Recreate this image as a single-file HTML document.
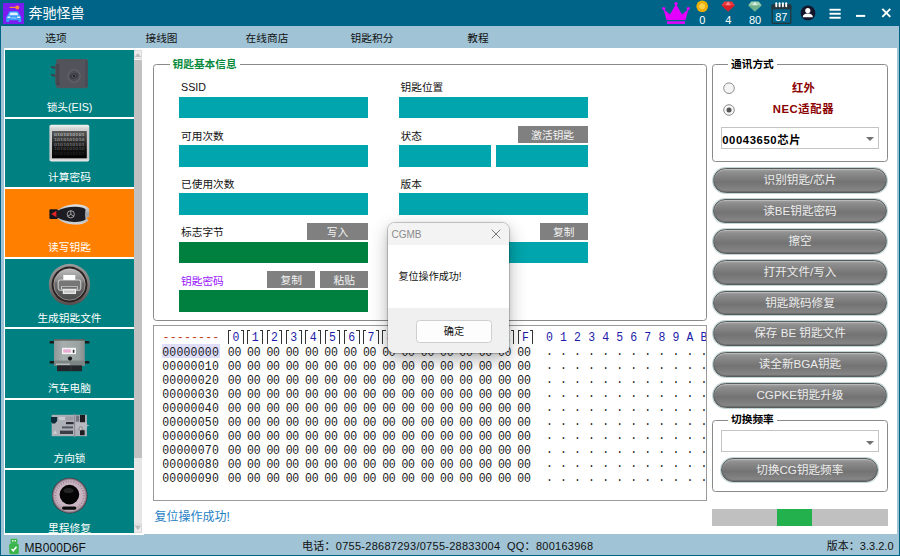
<!DOCTYPE html><html lang="zh"><head><meta charset="utf-8"><title>奔驰怪兽</title><style>
*{box-sizing:border-box;margin:0;padding:0}
html,body{width:900px;height:556px;overflow:hidden;background:#fff}
body{position:relative;font-family:"Liberation Sans","Noto Sans CJK SC",sans-serif;font-size:10.7px;color:#000}
.abs{position:absolute}
#title{left:0;top:0;width:900px;height:25.6px;background:#006488}
#menu{left:0;top:25.6px;width:900px;height:22.4px;background:#a0c4d6}
#lb{left:0;top:26px;width:3.5px;height:530px;background:#a0c4d6}
#rb{left:896.5px;top:26px;width:3.5px;height:530px;background:#a0c4d6}
#ld{left:0;top:0;width:1.3px;height:556px;background:#006488}
#rd{left:898.7px;top:0;width:1.3px;height:556px;background:#006488}
#bd{left:0;top:554.5px;width:900px;height:1.5px;background:#006488}
#status{left:0;top:534px;width:900px;height:20.5px;background:#a0c4d6}
.mi{top:27px;height:22px;line-height:22px;font-size:10.7px;color:#111;white-space:nowrap;transform:translateX(-50%)}
.sb{left:5px;width:128.6px;height:68.25px;background:#008080;overflow:hidden}
.sb .lab{position:absolute;left:0;width:129px;text-align:center;color:#fff;font-size:10.7px;line-height:14px;top:51.5px;white-space:nowrap}
.tin{background:#00a5ad;height:21.7px}
.gin{background:#00803e;height:21.9px}
.gb{background:#808080;color:#f4f4f4;text-align:center;font-size:10.7px;height:17px;line-height:18px;white-space:nowrap}
.fl{font-size:10.7px;line-height:14px;white-space:nowrap;color:#111}
.grp{border:1px solid #8a8a8a;border-radius:3.5px}
.glab{background:#fff;font-weight:bold;font-size:10.7px;line-height:14px;white-space:nowrap;padding:0 3px}
.pill{height:24.8px;border-radius:12.4px;border:1px solid #565c5c;background:linear-gradient(#a2a2a2 0%,#8e8e8e 14%,#7c7c7c 42%,#737373 56%,#7e7e7e 80%,#8a8a8a 100%);box-shadow:0 0 0 1px #c3d6d6, inset 0 1px 1px rgba(255,255,255,.3), inset 0 -1px 1px rgba(0,0,0,.2);color:#ececec;font-size:11.6px;line-height:21.8px;text-align:center;white-space:nowrap}
.combo{border:1px solid #c4c4c4;background:#fff;height:22px}
.combo:after{content:"";position:absolute;right:4px;top:9.4px;border-left:4.2px solid transparent;border-right:4.2px solid transparent;border-top:4.5px solid #707070}
.hex{font-family:"Liberation Mono",monospace;font-size:11.5px;line-height:14px;white-space:pre;color:#1a1a1a;transform:scaleY(1.09)}
</style></head><body>
<div id="title" class="abs"></div><div id="menu" class="abs"></div><div id="status" class="abs"></div>
<div id="lb" class="abs"></div><div id="rb" class="abs"></div><div id="ld" class="abs"></div><div id="rd" class="abs"></div><div id="bd" class="abs"></div>
<div class="abs" style="left:2.5px;top:2.5px;width:21.5px;height:21.5px;background:#7a1cf0"></div>
<svg class="abs" style="left:2.5px;top:2.5px" width="21.5" height="21.5" viewBox="0 0 21.5 21.5"><path d="M3.2 14 Q3.2 12.9 4.4 12.4 L6 9.1 Q6.5 8.2 7.6 8.2 L13.9 8.2 Q15 8.2 15.5 9.1 L17.1 12.4 Q18.3 12.9 18.3 14 L18.3 18.9 L15.4 18.9 L15.4 17.3 L6.1 17.3 L6.1 18.9 L3.2 18.9 Z" fill="#3a9bff"/><path d="M7.4 9.6 L14.1 9.6 L15.3 12.3 L6.2 12.3 Z" fill="#dff0ff"/><rect x="4.4" y="13.6" width="3" height="1.5" rx=".6" fill="#e8f4ff"/><rect x="14.1" y="13.6" width="3" height="1.5" rx=".6" fill="#e8f4ff"/><rect x="8.2" y="14.2" width="5.1" height="1.6" fill="#7cc0ff"/><circle cx="14.3" cy="4.4" r="2" fill="#ff8a3c"/><rect x="6.6" y="3.8" width="6.5" height="1.2" fill="#ff8a3c"/></svg>
<div class="abs" style="left:28.5px;top:3px;font-size:14px;line-height:20px;color:#fff;white-space:nowrap">奔驰怪兽</div>
<svg class="abs" style="left:660px;top:0" width="240" height="26" viewBox="660 0 240 26">
<path d="M663.5 9 L670 14.5 L676 4 L682 14.5 L688.5 9 L685.5 20 L666.5 20 Z" fill="#e400ff"/><circle cx="663.8" cy="8.6" r="1.6" fill="#e400ff"/><circle cx="676" cy="3.6" r="1.7" fill="#e400ff"/><circle cx="688.2" cy="8.6" r="1.6" fill="#e400ff"/><rect x="667" y="21.3" width="18" height="2.6" fill="#e400ff"/>
<circle cx="702.2" cy="6.3" r="5.8" fill="#f5b400"/><circle cx="702.2" cy="6.3" r="3.6" fill="#ffd24a" stroke="#e09a00" stroke-width=".8"/>
<path d="M721.5 5.2 L724.5 1.6 L731.8 1.6 L734.8 5.2 L728.1 11.6 Z" fill="#f0383c"/><path d="M721.5 5.2 L734.8 5.2 L728.1 11.6 Z" fill="#d81f2a"/><path d="M725.5 5.2 L728.1 1.6 L730.8 5.2 Z" fill="#ff8a8a"/>
<path d="M748.3 5.2 L751.3 1.6 L758.6 1.6 L761.6 5.2 L754.9 11.6 Z" fill="#9fd0b0"/><path d="M748.3 5.2 L761.6 5.2 L754.9 11.6 Z" fill="#6fb08c"/><path d="M752.3 5.2 L754.9 1.6 L757.6 5.2 Z" fill="#d8eee0"/>
<rect x="772.2" y="5" width="18.6" height="18.4" rx="1.2" fill="#006488" stroke="#26363c" stroke-width="1.3"/><rect x="771.6" y="4.4" width="19.8" height="4.8" rx="1" fill="#26363c"/>
<rect x="775.3499999999999" y="2.2" width="1.9" height="5" rx=".95" fill="#fff"/>
<rect x="778.65" y="2.2" width="1.9" height="5" rx=".95" fill="#fff"/>
<rect x="781.9499999999999" y="2.2" width="1.9" height="5" rx=".95" fill="#fff"/>
<rect x="785.25" y="2.2" width="1.9" height="5" rx=".95" fill="#fff"/>
<circle cx="808" cy="12.9" r="7.4" fill="#14142a"/><circle cx="807.8" cy="10.6" r="2.6" fill="#fff"/><path d="M802.8 17.2 Q802.8 13.6 807.8 13.6 Q812.8 13.6 812.8 17.2 Z" fill="#fff"/>
<rect x="829.5" y="8.8" width="11.2" height="1.9" fill="#fff"/><rect x="829.5" y="12.8" width="11.2" height="1.9" fill="#fff"/><rect x="829.5" y="16.8" width="11.2" height="1.9" fill="#fff"/>
<rect x="856" y="14.9" width="9.2" height="2" fill="#fff"/>
<path d="M882.3 8.8 L890.3 16.8 M890.3 8.8 L882.3 16.8" stroke="#fff" stroke-width="1.9" fill="none"/>
<text x="702.2" y="24" font-size="11" fill="#fff" text-anchor="middle" font-family="Liberation Sans,sans-serif">0</text>
<text x="728.2" y="24" font-size="11" fill="#fff" text-anchor="middle" font-family="Liberation Sans,sans-serif">4</text>
<text x="755" y="24" font-size="11" fill="#fff" text-anchor="middle" font-family="Liberation Sans,sans-serif">80</text>
<text x="781.3" y="21" font-size="11" fill="#fff" text-anchor="middle" font-family="Liberation Sans,sans-serif">87</text>
</svg>
<div class="abs mi" style="left:56px">选项</div>
<div class="abs mi" style="left:161.5px">接线图</div>
<div class="abs mi" style="left:267px">在线商店</div>
<div class="abs mi" style="left:372px">钥匙积分</div>
<div class="abs mi" style="left:478px">教程</div>
<div class="abs" style="left:3.5px;top:48px;width:140px;height:486.5px;background:#fff"></div>
<div class="abs" style="left:0;top:50px;width:145px;height:483.4px;overflow:hidden">
<div class="abs sb" style="top:-1.75px"><!--ICON0--><div class="lab">锁头(EIS)</div></div>
<div class="abs sb" style="top:68.5px"><!--ICON1--><div class="lab">计算密码</div></div>
<div class="abs sb" style="top:138.75px;background:#ff8000"><!--ICON2--><div class="lab">读写钥匙</div></div>
<div class="abs sb" style="top:209.0px"><!--ICON3--><div class="lab">生成钥匙文件</div></div>
<div class="abs sb" style="top:279.25px"><!--ICON4--><div class="lab">汽车电脑</div></div>
<div class="abs sb" style="top:349.5px"><!--ICON5--><div class="lab">方向锁</div></div>
<div class="abs sb" style="top:419.75px"><!--ICON6--><div class="lab">里程修复</div></div>
<svg class="abs" style="left:0;top:0" width="145" height="483.5" viewBox="0 50 145 483.5"><defs><linearGradient id="scr" x1="0" y1="0" x2="0" y2="1"><stop offset="0" stop-color="#5a5a5a"/><stop offset=".6" stop-color="#161616"/><stop offset="1" stop-color="#000"/></linearGradient><linearGradient id="frm" x1="0" y1="0" x2="0" y2="1"><stop offset="0" stop-color="#f4f4f4"/><stop offset=".12" stop-color="#d0d0d0"/><stop offset=".9" stop-color="#c4c4c4"/><stop offset="1" stop-color="#f0f0f0"/></linearGradient><linearGradient id="ring" x1="0" y1="0" x2="0" y2="1"><stop offset="0" stop-color="#9a9a9a"/><stop offset=".5" stop-color="#7c7c7c"/><stop offset="1" stop-color="#5a4c4c"/></linearGradient><linearGradient id="inr" x1="0" y1="0" x2="0" y2="1"><stop offset="0" stop-color="#b4b4b4"/><stop offset=".45" stop-color="#6e6e6e"/><stop offset="1" stop-color="#4a4a4a"/></linearGradient><linearGradient id="ecu" x1="0" y1="0" x2="1" y2="0"><stop offset="0" stop-color="#8e9696"/><stop offset=".3" stop-color="#a6aeae"/><stop offset=".8" stop-color="#9aa2a2"/><stop offset="1" stop-color="#868e8e"/></linearGradient><radialGradient id="spd" cx=".5" cy=".5" r=".5"><stop offset="0" stop-color="#d8c6d2"/><stop offset=".85" stop-color="#c4aebb"/><stop offset=".93" stop-color="#8a7884"/><stop offset="1" stop-color="#3a3038"/></radialGradient><linearGradient id="slv" x1="0" y1="0" x2="0" y2="1"><stop offset="0" stop-color="#e6e8ea"/><stop offset=".5" stop-color="#9aa0a6"/><stop offset="1" stop-color="#d4d8dc"/></linearGradient></defs><path d="M51 66 L53.6 66.6 L56.4 66.6 L56.4 68.6 L53.4 68.6 L51 67.4 Z" fill="#3e3e46"/><path d="M51 73.8 L53.6 74.4 L56.4 74.4 L56.4 76.4 L53.4 76.4 L51 75.2 Z" fill="#3e3e46"/><path d="M58 59 L86 59 Q87.8 59 87.8 60.8 L87.8 86.4 Q87.8 88.2 86 88.2 L58 88.2 Q56.2 88.2 56.2 86.4 L56.2 84.5 L55.2 84.5 L55.2 64 L56.2 64 L56.2 60.8 Q56.2 59 58 59 Z" fill="#53535b"/><rect x="56.2" y="64" width="3" height="20" fill="#47474f"/><path d="M59.2 82 L59.2 84.6 L56.4 84.6" stroke="#3c3c44" stroke-width=".8" fill="none"/><rect x="85" y="60.5" width="2.6" height="26" fill="#4b4b53"/><circle cx="74" cy="76" r="6.9" fill="#5f5f67"/><circle cx="74" cy="76" r="5.4" fill="#4e4e56"/><ellipse cx="74" cy="76" rx="4.3" ry="2.6" fill="#3a3a42" transform="rotate(-18 74 76)"/><ellipse cx="74" cy="76" rx="2.4" ry="1.5" fill="#55555d" transform="rotate(-18 74 76)"/><circle cx="74" cy="76" r="1" fill="#101014"/><rect x="49.4" y="124.7" width="39.9" height="36.9" rx="2" fill="url(#frm)"/><rect x="52" y="131" width="34.8" height="27.3" fill="url(#scr)"/><text x="54" y="136.3" font-size="4.1" font-weight="bold" font-family="Liberation Sans,sans-serif" fill="#fff" fill-opacity="0.55" textLength="30.5" lengthAdjust="spacingAndGlyphs">0101010101</text><text x="54" y="141.0" font-size="4.1" font-weight="bold" font-family="Liberation Sans,sans-serif" fill="#fff" fill-opacity="0.45" textLength="30.5" lengthAdjust="spacingAndGlyphs">1010101010</text><text x="54" y="145.70000000000002" font-size="4.1" font-weight="bold" font-family="Liberation Sans,sans-serif" fill="#fff" fill-opacity="0.35" textLength="30.5" lengthAdjust="spacingAndGlyphs">0101010101</text><text x="54" y="150.4" font-size="4.1" font-weight="bold" font-family="Liberation Sans,sans-serif" fill="#fff" fill-opacity="0.22" textLength="30.5" lengthAdjust="spacingAndGlyphs">1010101010</text><text x="54" y="155.10000000000002" font-size="4.1" font-weight="bold" font-family="Liberation Sans,sans-serif" fill="#fff" fill-opacity="0.1" textLength="30.5" lengthAdjust="spacingAndGlyphs">0101010101</text><path d="M57 210.5 Q66 204 76 204.2 Q86 204.5 89.2 209 L89.2 216.8 L86.5 217.6 L88.4 220.4 Q84 224.8 74 224.6 Q64 224.3 57 218 Z" fill="url(#slv)"/><path d="M57.3 210.8 Q66 206.6 75.5 206.8 Q83 207 85.5 209.2 Q84.5 214.5 85.6 219.6 Q82 222.2 74 222 Q64 221.6 57.3 217.6 Z" fill="#1c1c22"/><rect x="49.4" y="209.3" width="8.4" height="9.6" rx="1" fill="#15151c"/><path d="M51.2 214 L56.4 210.8 L56.4 217.3 Z" fill="#e0242c"/><circle cx="70.8" cy="214.3" r="3.6" fill="none" stroke="#d8d8d8" stroke-width=".7"/><path d="M70.8 214.3 L70.8 210.8 M70.8 214.3 L67.8 216.2 M70.8 214.3 L73.8 216.2" stroke="#d8d8d8" stroke-width=".7"/><circle cx="69.5" cy="284.5" r="20.7" fill="url(#ring)"/><circle cx="69.5" cy="284.5" r="17.9" fill="#2c2222"/><circle cx="69.5" cy="284.5" r="15.7" fill="url(#inr)" stroke="#bdbdbd" stroke-width=".6"/><path d="M54.6 281 A15.2 15.2 0 0 1 84.4 281 Q69.5 287 54.6 281 Z" fill="#fff" fill-opacity=".13"/><rect x="63.3" y="275" width="12" height="5.6" fill="#fff"/><rect x="58.2" y="280" width="22.6" height="10.3" rx="2" fill="#767676" stroke="#ececec" stroke-width=".8"/><rect x="61.5" y="286.8" width="15.8" height="2.2" fill="#5a5a5a" stroke="#ececec" stroke-width=".7"/><rect x="62.8" y="289" width="13.2" height="5" fill="#e8e8e8"/><rect x="64" y="290.4" width="10.8" height="2.4" fill="#c6c6c6"/><rect x="49.5" y="341" width="5" height="2.6" rx="1.2" fill="#1a1a1a"/><rect x="49.5" y="361" width="5" height="2.6" rx="1.2" fill="#1a1a1a"/><rect x="84.5" y="341" width="5" height="2.6" rx="1.2" fill="#1a1a1a"/><rect x="84.5" y="361" width="5" height="2.6" rx="1.2" fill="#1a1a1a"/><rect x="54" y="339.2" width="30.8" height="26.8" rx="1.5" fill="url(#ecu)"/><rect x="54" y="339.2" width="30.8" height="1.4" fill="#565c5c"/><rect x="54" y="360.6" width="30.8" height="5.4" fill="#7c8484"/><rect x="56" y="363.6" width="14" height="1.2" fill="#c4c8c8"/><rect x="57" y="365.4" width="25" height="5.8" fill="#23262a"/><rect x="70.6" y="366" width=".8" height="5" fill="#3a3e42"/><rect x="62" y="347.8" width="14" height="6.4" fill="#f4f4f4"/><rect x="63.2" y="349.4" width="7.6" height="3.2" fill="#e070b8" fill-opacity=".55"/><rect x="72.8" y="349.8" width="1.6" height="3" fill="#333"/><circle cx="70" cy="358.6" r="2.1" fill="#15171a"/><rect x="51.7" y="414.8" width="35.2" height="21.4" fill="#aeb0b8"/><rect x="74" y="413.8" width="1.2" height="23.4" fill="#8c8e96"/><rect x="75.5" y="422.5" width="11.5" height="6.5" fill="#b8bac2"/><path d="M86.8 424.4 L89.6 425.4 L86.8 426.6 Z" fill="#a8aab2"/><path d="M51 417 L57.2 417 L57.2 421 L55 423.4 L52.4 423.4 L51 421.4 Z" fill="#0c2c38"/><rect x="80" y="415" width="5" height="7.2" fill="#1c1c20"/><rect x="80" y="430.2" width="4.6" height="5" fill="#1c1c20"/><rect x="76" y="415.6" width="3.2" height="6" fill="#74767e"/><rect x="59" y="417" width="6" height="3" fill="#c8cad0"/><rect x="65.5" y="416.5" width="8" height="4" fill="#9c9ea6"/><rect x="66" y="422" width="7.6" height="2.2" fill="#2c2e34"/><rect x="62" y="426.4" width="11" height="2" fill="#54565e"/><rect x="60" y="430.6" width="13" height="3.4" fill="#3c3e46"/><circle cx="80.6" cy="428.6" r="1.7" fill="#d0d0c8" stroke="#55575f" stroke-width=".6"/><path d="M53 433.8 L55 430.6 L57 433.8 Z" fill="#d0d2d8"/><circle cx="69.7" cy="495.6" r="17.8" fill="url(#spd)"/><circle cx="69.7" cy="495.6" r="14.2" fill="none" stroke="#7a6874" stroke-width="1.6" stroke-dasharray=".7 1.9" stroke-opacity=".8"/><circle cx="69.4" cy="494.6" r="9.8" fill="#050505"/><ellipse cx="68.5" cy="490.5" rx="5" ry="2.6" fill="#2c2c2c" fill-opacity=".8"/><rect x="62" y="506.4" width="14.4" height="3.3" rx="1.65" fill="#0a0a0a"/></svg>
</div>
<div class="abs" style="left:134.3px;top:50px;width:7.7px;height:483.2px;background:#e6e6e6"></div>
<div class="abs" style="left:134.3px;top:59.8px;width:7.7px;height:398.7px;background:#c1c1c1"></div>
<svg class="abs" style="left:134.3px;top:50px" width="7.7" height="483.2" viewBox="0 0 7.7 483.2"><rect x="0" y="0" width="7.7" height="9.6" fill="#f4f4f4"/><rect x=".3" y=".3" width="7.1" height="7.6" fill="#ececec" stroke="#cfcfcf" stroke-width=".6"/><path d="M.6 6.6 L3.85 2.5 L7.1 6.6 Z" fill="#bcbcbc"/><rect x=".3" y="474.4" width="7.1" height="8.2" fill="#ececec" stroke="#cfcfcf" stroke-width=".6"/><path d="M.6 476 L3.85 480.6 L7.1 476 Z" fill="#bcbcbc"/></svg>
<div class="abs grp" style="left:153px;top:64px;width:553.5px;height:256.5px"></div>
<div class="abs glab" style="left:169.5px;top:56.5px;color:#078a3c">钥匙基本信息</div>
<div class="abs fl" style="left:181px;top:80.3px">SSID</div>
<div class="abs tin" style="left:179.2px;top:96.6px;width:189.1px"></div>
<div class="abs fl" style="left:181px;top:128.55px">可用次数</div>
<div class="abs tin" style="left:179.2px;top:144.85px;width:189.1px"></div>
<div class="abs fl" style="left:181px;top:176.8px">已使用次数</div>
<div class="abs tin" style="left:179.2px;top:193.1px;width:189.1px"></div>
<div class="abs fl" style="left:181px;top:225.3px">标志字节</div>
<div class="abs gb" style="left:306.8px;top:222.5px;width:61.5px">写入</div>
<div class="abs gin" style="left:179.2px;top:241.5px;width:189.1px"></div>
<div class="abs fl" style="left:181px;top:273.5px;color:#9a14ff">钥匙密码</div>
<div class="abs gb" style="left:267px;top:270.7px;width:48.3px">复制</div>
<div class="abs gb" style="left:320px;top:270.7px;width:48.3px">粘贴</div>
<div class="abs gin" style="left:179.2px;top:289.8px;width:189.1px"></div>
<div class="abs fl" style="left:400.5px;top:80.3px">钥匙位置</div>
<div class="abs tin" style="left:399.1px;top:96.6px;width:188.6px"></div>
<div class="abs fl" style="left:400.5px;top:128.5px">状态</div>
<div class="abs gb" style="left:517.6px;top:125.8px;width:70.1px">激活钥匙</div>
<div class="abs tin" style="left:399.1px;top:144.9px;width:91.8px"></div>
<div class="abs tin" style="left:495.9px;top:144.9px;width:91.8px"></div>
<div class="abs fl" style="left:400.5px;top:176.8px">版本</div>
<div class="abs tin" style="left:399.1px;top:193.1px;width:188.6px"></div>
<div class="abs gb" style="left:539.7px;top:222.5px;width:48px">复制</div>
<div class="abs tin" style="left:399.1px;top:241.5px;width:188.6px"></div>
<div class="abs" style="left:153px;top:325px;width:553.5px;height:175.5px;border:1px solid #9a9a9a;overflow:hidden"><div class="abs hex" style="left:8.6px;top:5.4px;color:#c0431a;letter-spacing:.2px">--------</div>
<div class="abs" style="left:74.0px;top:3.8px;width:3.2px;height:14px;border-left:1.1px solid #333;border-top:1.1px solid #333"></div>
<div class="abs" style="left:86.6px;top:3.8px;width:3.2px;height:14px;border-right:1.1px solid #333;border-top:1.1px solid #333"></div>
<div class="abs hex" style="left:74.0px;top:4.8px;width:15.8px;text-align:center;color:#1c1ca8">0</div>
<div class="abs" style="left:93.31px;top:3.8px;width:3.2px;height:14px;border-left:1.1px solid #333;border-top:1.1px solid #333"></div>
<div class="abs" style="left:105.91px;top:3.8px;width:3.2px;height:14px;border-right:1.1px solid #333;border-top:1.1px solid #333"></div>
<div class="abs hex" style="left:93.31px;top:4.8px;width:15.8px;text-align:center;color:#1c1ca8">1</div>
<div class="abs" style="left:112.62px;top:3.8px;width:3.2px;height:14px;border-left:1.1px solid #333;border-top:1.1px solid #333"></div>
<div class="abs" style="left:125.22px;top:3.8px;width:3.2px;height:14px;border-right:1.1px solid #333;border-top:1.1px solid #333"></div>
<div class="abs hex" style="left:112.62px;top:4.8px;width:15.8px;text-align:center;color:#1c1ca8">2</div>
<div class="abs" style="left:131.93px;top:3.8px;width:3.2px;height:14px;border-left:1.1px solid #333;border-top:1.1px solid #333"></div>
<div class="abs" style="left:144.53px;top:3.8px;width:3.2px;height:14px;border-right:1.1px solid #333;border-top:1.1px solid #333"></div>
<div class="abs hex" style="left:131.93px;top:4.8px;width:15.8px;text-align:center;color:#1c1ca8">3</div>
<div class="abs" style="left:151.24px;top:3.8px;width:3.2px;height:14px;border-left:1.1px solid #333;border-top:1.1px solid #333"></div>
<div class="abs" style="left:163.84px;top:3.8px;width:3.2px;height:14px;border-right:1.1px solid #333;border-top:1.1px solid #333"></div>
<div class="abs hex" style="left:151.24px;top:4.8px;width:15.8px;text-align:center;color:#1c1ca8">4</div>
<div class="abs" style="left:170.55px;top:3.8px;width:3.2px;height:14px;border-left:1.1px solid #333;border-top:1.1px solid #333"></div>
<div class="abs" style="left:183.15px;top:3.8px;width:3.2px;height:14px;border-right:1.1px solid #333;border-top:1.1px solid #333"></div>
<div class="abs hex" style="left:170.55px;top:4.8px;width:15.8px;text-align:center;color:#1c1ca8">5</div>
<div class="abs" style="left:189.86px;top:3.8px;width:3.2px;height:14px;border-left:1.1px solid #333;border-top:1.1px solid #333"></div>
<div class="abs" style="left:202.46px;top:3.8px;width:3.2px;height:14px;border-right:1.1px solid #333;border-top:1.1px solid #333"></div>
<div class="abs hex" style="left:189.86px;top:4.8px;width:15.8px;text-align:center;color:#1c1ca8">6</div>
<div class="abs" style="left:209.17px;top:3.8px;width:3.2px;height:14px;border-left:1.1px solid #333;border-top:1.1px solid #333"></div>
<div class="abs" style="left:221.77px;top:3.8px;width:3.2px;height:14px;border-right:1.1px solid #333;border-top:1.1px solid #333"></div>
<div class="abs hex" style="left:209.17px;top:4.8px;width:15.8px;text-align:center;color:#1c1ca8">7</div>
<div class="abs" style="left:228.48px;top:3.8px;width:3.2px;height:14px;border-left:1.1px solid #333;border-top:1.1px solid #333"></div>
<div class="abs" style="left:241.08px;top:3.8px;width:3.2px;height:14px;border-right:1.1px solid #333;border-top:1.1px solid #333"></div>
<div class="abs hex" style="left:228.48px;top:4.8px;width:15.8px;text-align:center;color:#1c1ca8">8</div>
<div class="abs" style="left:247.79px;top:3.8px;width:3.2px;height:14px;border-left:1.1px solid #333;border-top:1.1px solid #333"></div>
<div class="abs" style="left:260.39px;top:3.8px;width:3.2px;height:14px;border-right:1.1px solid #333;border-top:1.1px solid #333"></div>
<div class="abs hex" style="left:247.79px;top:4.8px;width:15.8px;text-align:center;color:#1c1ca8">9</div>
<div class="abs" style="left:267.1px;top:3.8px;width:3.2px;height:14px;border-left:1.1px solid #333;border-top:1.1px solid #333"></div>
<div class="abs" style="left:279.7px;top:3.8px;width:3.2px;height:14px;border-right:1.1px solid #333;border-top:1.1px solid #333"></div>
<div class="abs hex" style="left:267.1px;top:4.8px;width:15.8px;text-align:center;color:#1c1ca8">A</div>
<div class="abs" style="left:286.41px;top:3.8px;width:3.2px;height:14px;border-left:1.1px solid #333;border-top:1.1px solid #333"></div>
<div class="abs" style="left:299.01px;top:3.8px;width:3.2px;height:14px;border-right:1.1px solid #333;border-top:1.1px solid #333"></div>
<div class="abs hex" style="left:286.41px;top:4.8px;width:15.8px;text-align:center;color:#1c1ca8">B</div>
<div class="abs" style="left:305.72px;top:3.8px;width:3.2px;height:14px;border-left:1.1px solid #333;border-top:1.1px solid #333"></div>
<div class="abs" style="left:318.32px;top:3.8px;width:3.2px;height:14px;border-right:1.1px solid #333;border-top:1.1px solid #333"></div>
<div class="abs hex" style="left:305.72px;top:4.8px;width:15.8px;text-align:center;color:#1c1ca8">C</div>
<div class="abs" style="left:325.03px;top:3.8px;width:3.2px;height:14px;border-left:1.1px solid #333;border-top:1.1px solid #333"></div>
<div class="abs" style="left:337.63px;top:3.8px;width:3.2px;height:14px;border-right:1.1px solid #333;border-top:1.1px solid #333"></div>
<div class="abs hex" style="left:325.03px;top:4.8px;width:15.8px;text-align:center;color:#1c1ca8">D</div>
<div class="abs" style="left:344.34px;top:3.8px;width:3.2px;height:14px;border-left:1.1px solid #333;border-top:1.1px solid #333"></div>
<div class="abs" style="left:356.94px;top:3.8px;width:3.2px;height:14px;border-right:1.1px solid #333;border-top:1.1px solid #333"></div>
<div class="abs hex" style="left:344.34px;top:4.8px;width:15.8px;text-align:center;color:#1c1ca8">E</div>
<div class="abs" style="left:363.65px;top:3.8px;width:3.2px;height:14px;border-left:1.1px solid #333;border-top:1.1px solid #333"></div>
<div class="abs" style="left:376.25px;top:3.8px;width:3.2px;height:14px;border-right:1.1px solid #333;border-top:1.1px solid #333"></div>
<div class="abs hex" style="left:363.65px;top:4.8px;width:15.8px;text-align:center;color:#1c1ca8">F</div>
<div class="abs hex" style="left:395.4px;top:4.8px;width:14px;margin-left:-7px;text-align:center;color:#1c1ca8">0</div>
<div class="abs hex" style="left:409.46px;top:4.8px;width:14px;margin-left:-7px;text-align:center;color:#1c1ca8">1</div>
<div class="abs hex" style="left:423.52px;top:4.8px;width:14px;margin-left:-7px;text-align:center;color:#1c1ca8">2</div>
<div class="abs hex" style="left:437.58px;top:4.8px;width:14px;margin-left:-7px;text-align:center;color:#1c1ca8">3</div>
<div class="abs hex" style="left:451.64px;top:4.8px;width:14px;margin-left:-7px;text-align:center;color:#1c1ca8">4</div>
<div class="abs hex" style="left:465.7px;top:4.8px;width:14px;margin-left:-7px;text-align:center;color:#1c1ca8">5</div>
<div class="abs hex" style="left:479.76px;top:4.8px;width:14px;margin-left:-7px;text-align:center;color:#1c1ca8">6</div>
<div class="abs hex" style="left:493.82px;top:4.8px;width:14px;margin-left:-7px;text-align:center;color:#1c1ca8">7</div>
<div class="abs hex" style="left:507.88px;top:4.8px;width:14px;margin-left:-7px;text-align:center;color:#1c1ca8">8</div>
<div class="abs hex" style="left:521.94px;top:4.8px;width:14px;margin-left:-7px;text-align:center;color:#1c1ca8">9</div>
<div class="abs hex" style="left:536.0px;top:4.8px;width:14px;margin-left:-7px;text-align:center;color:#1c1ca8">A</div>
<div class="abs hex" style="left:550.06px;top:4.8px;width:14px;margin-left:-7px;text-align:center;color:#1c1ca8">B</div>
<div class="abs" style="left:7.7px;top:18px;width:58px;height:14px;background:#dedefa"></div>
<div class="abs hex" style="left:8.2px;top:19.6px;letter-spacing:.2px">00000000</div>
<div class="abs hex" style="left:73.8px;top:19.6px;letter-spacing:-.25px"><span style="display:inline-block;width:19.31px">00</span><span style="display:inline-block;width:19.31px">00</span><span style="display:inline-block;width:19.31px">00</span><span style="display:inline-block;width:19.31px">00</span><span style="display:inline-block;width:19.31px">00</span><span style="display:inline-block;width:19.31px">00</span><span style="display:inline-block;width:19.31px">00</span><span style="display:inline-block;width:19.31px">00</span><span style="display:inline-block;width:19.31px">00</span><span style="display:inline-block;width:19.31px">00</span><span style="display:inline-block;width:19.31px">00</span><span style="display:inline-block;width:19.31px">00</span><span style="display:inline-block;width:19.31px">00</span><span style="display:inline-block;width:19.31px">00</span><span style="display:inline-block;width:19.31px">00</span><span style="display:inline-block;width:19.31px">00</span></div>
<div class="abs hex" style="left:388.4px;top:18.5px"><span style="display:inline-block;width:14.06px;text-align:center">.</span><span style="display:inline-block;width:14.06px;text-align:center">.</span><span style="display:inline-block;width:14.06px;text-align:center">.</span><span style="display:inline-block;width:14.06px;text-align:center">.</span><span style="display:inline-block;width:14.06px;text-align:center">.</span><span style="display:inline-block;width:14.06px;text-align:center">.</span><span style="display:inline-block;width:14.06px;text-align:center">.</span><span style="display:inline-block;width:14.06px;text-align:center">.</span><span style="display:inline-block;width:14.06px;text-align:center">.</span><span style="display:inline-block;width:14.06px;text-align:center">.</span><span style="display:inline-block;width:14.06px;text-align:center">.</span><span style="display:inline-block;width:14.06px;text-align:center">.</span></div>
<div class="abs hex" style="left:8.2px;top:33.64px;letter-spacing:.2px">00000010</div>
<div class="abs hex" style="left:73.8px;top:33.64px;letter-spacing:-.25px"><span style="display:inline-block;width:19.31px">00</span><span style="display:inline-block;width:19.31px">00</span><span style="display:inline-block;width:19.31px">00</span><span style="display:inline-block;width:19.31px">00</span><span style="display:inline-block;width:19.31px">00</span><span style="display:inline-block;width:19.31px">00</span><span style="display:inline-block;width:19.31px">00</span><span style="display:inline-block;width:19.31px">00</span><span style="display:inline-block;width:19.31px">00</span><span style="display:inline-block;width:19.31px">00</span><span style="display:inline-block;width:19.31px">00</span><span style="display:inline-block;width:19.31px">00</span><span style="display:inline-block;width:19.31px">00</span><span style="display:inline-block;width:19.31px">00</span><span style="display:inline-block;width:19.31px">00</span><span style="display:inline-block;width:19.31px">00</span></div>
<div class="abs hex" style="left:388.4px;top:32.54px"><span style="display:inline-block;width:14.06px;text-align:center">.</span><span style="display:inline-block;width:14.06px;text-align:center">.</span><span style="display:inline-block;width:14.06px;text-align:center">.</span><span style="display:inline-block;width:14.06px;text-align:center">.</span><span style="display:inline-block;width:14.06px;text-align:center">.</span><span style="display:inline-block;width:14.06px;text-align:center">.</span><span style="display:inline-block;width:14.06px;text-align:center">.</span><span style="display:inline-block;width:14.06px;text-align:center">.</span><span style="display:inline-block;width:14.06px;text-align:center">.</span><span style="display:inline-block;width:14.06px;text-align:center">.</span><span style="display:inline-block;width:14.06px;text-align:center">.</span><span style="display:inline-block;width:14.06px;text-align:center">.</span></div>
<div class="abs hex" style="left:8.2px;top:47.68px;letter-spacing:.2px">00000020</div>
<div class="abs hex" style="left:73.8px;top:47.68px;letter-spacing:-.25px"><span style="display:inline-block;width:19.31px">00</span><span style="display:inline-block;width:19.31px">00</span><span style="display:inline-block;width:19.31px">00</span><span style="display:inline-block;width:19.31px">00</span><span style="display:inline-block;width:19.31px">00</span><span style="display:inline-block;width:19.31px">00</span><span style="display:inline-block;width:19.31px">00</span><span style="display:inline-block;width:19.31px">00</span><span style="display:inline-block;width:19.31px">00</span><span style="display:inline-block;width:19.31px">00</span><span style="display:inline-block;width:19.31px">00</span><span style="display:inline-block;width:19.31px">00</span><span style="display:inline-block;width:19.31px">00</span><span style="display:inline-block;width:19.31px">00</span><span style="display:inline-block;width:19.31px">00</span><span style="display:inline-block;width:19.31px">00</span></div>
<div class="abs hex" style="left:388.4px;top:46.58px"><span style="display:inline-block;width:14.06px;text-align:center">.</span><span style="display:inline-block;width:14.06px;text-align:center">.</span><span style="display:inline-block;width:14.06px;text-align:center">.</span><span style="display:inline-block;width:14.06px;text-align:center">.</span><span style="display:inline-block;width:14.06px;text-align:center">.</span><span style="display:inline-block;width:14.06px;text-align:center">.</span><span style="display:inline-block;width:14.06px;text-align:center">.</span><span style="display:inline-block;width:14.06px;text-align:center">.</span><span style="display:inline-block;width:14.06px;text-align:center">.</span><span style="display:inline-block;width:14.06px;text-align:center">.</span><span style="display:inline-block;width:14.06px;text-align:center">.</span><span style="display:inline-block;width:14.06px;text-align:center">.</span></div>
<div class="abs hex" style="left:8.2px;top:61.72px;letter-spacing:.2px">00000030</div>
<div class="abs hex" style="left:73.8px;top:61.72px;letter-spacing:-.25px"><span style="display:inline-block;width:19.31px">00</span><span style="display:inline-block;width:19.31px">00</span><span style="display:inline-block;width:19.31px">00</span><span style="display:inline-block;width:19.31px">00</span><span style="display:inline-block;width:19.31px">00</span><span style="display:inline-block;width:19.31px">00</span><span style="display:inline-block;width:19.31px">00</span><span style="display:inline-block;width:19.31px">00</span><span style="display:inline-block;width:19.31px">00</span><span style="display:inline-block;width:19.31px">00</span><span style="display:inline-block;width:19.31px">00</span><span style="display:inline-block;width:19.31px">00</span><span style="display:inline-block;width:19.31px">00</span><span style="display:inline-block;width:19.31px">00</span><span style="display:inline-block;width:19.31px">00</span><span style="display:inline-block;width:19.31px">00</span></div>
<div class="abs hex" style="left:388.4px;top:60.62px"><span style="display:inline-block;width:14.06px;text-align:center">.</span><span style="display:inline-block;width:14.06px;text-align:center">.</span><span style="display:inline-block;width:14.06px;text-align:center">.</span><span style="display:inline-block;width:14.06px;text-align:center">.</span><span style="display:inline-block;width:14.06px;text-align:center">.</span><span style="display:inline-block;width:14.06px;text-align:center">.</span><span style="display:inline-block;width:14.06px;text-align:center">.</span><span style="display:inline-block;width:14.06px;text-align:center">.</span><span style="display:inline-block;width:14.06px;text-align:center">.</span><span style="display:inline-block;width:14.06px;text-align:center">.</span><span style="display:inline-block;width:14.06px;text-align:center">.</span><span style="display:inline-block;width:14.06px;text-align:center">.</span></div>
<div class="abs hex" style="left:8.2px;top:75.76px;letter-spacing:.2px">00000040</div>
<div class="abs hex" style="left:73.8px;top:75.76px;letter-spacing:-.25px"><span style="display:inline-block;width:19.31px">00</span><span style="display:inline-block;width:19.31px">00</span><span style="display:inline-block;width:19.31px">00</span><span style="display:inline-block;width:19.31px">00</span><span style="display:inline-block;width:19.31px">00</span><span style="display:inline-block;width:19.31px">00</span><span style="display:inline-block;width:19.31px">00</span><span style="display:inline-block;width:19.31px">00</span><span style="display:inline-block;width:19.31px">00</span><span style="display:inline-block;width:19.31px">00</span><span style="display:inline-block;width:19.31px">00</span><span style="display:inline-block;width:19.31px">00</span><span style="display:inline-block;width:19.31px">00</span><span style="display:inline-block;width:19.31px">00</span><span style="display:inline-block;width:19.31px">00</span><span style="display:inline-block;width:19.31px">00</span></div>
<div class="abs hex" style="left:388.4px;top:74.66px"><span style="display:inline-block;width:14.06px;text-align:center">.</span><span style="display:inline-block;width:14.06px;text-align:center">.</span><span style="display:inline-block;width:14.06px;text-align:center">.</span><span style="display:inline-block;width:14.06px;text-align:center">.</span><span style="display:inline-block;width:14.06px;text-align:center">.</span><span style="display:inline-block;width:14.06px;text-align:center">.</span><span style="display:inline-block;width:14.06px;text-align:center">.</span><span style="display:inline-block;width:14.06px;text-align:center">.</span><span style="display:inline-block;width:14.06px;text-align:center">.</span><span style="display:inline-block;width:14.06px;text-align:center">.</span><span style="display:inline-block;width:14.06px;text-align:center">.</span><span style="display:inline-block;width:14.06px;text-align:center">.</span></div>
<div class="abs hex" style="left:8.2px;top:89.8px;letter-spacing:.2px">00000050</div>
<div class="abs hex" style="left:73.8px;top:89.8px;letter-spacing:-.25px"><span style="display:inline-block;width:19.31px">00</span><span style="display:inline-block;width:19.31px">00</span><span style="display:inline-block;width:19.31px">00</span><span style="display:inline-block;width:19.31px">00</span><span style="display:inline-block;width:19.31px">00</span><span style="display:inline-block;width:19.31px">00</span><span style="display:inline-block;width:19.31px">00</span><span style="display:inline-block;width:19.31px">00</span><span style="display:inline-block;width:19.31px">00</span><span style="display:inline-block;width:19.31px">00</span><span style="display:inline-block;width:19.31px">00</span><span style="display:inline-block;width:19.31px">00</span><span style="display:inline-block;width:19.31px">00</span><span style="display:inline-block;width:19.31px">00</span><span style="display:inline-block;width:19.31px">00</span><span style="display:inline-block;width:19.31px">00</span></div>
<div class="abs hex" style="left:388.4px;top:88.7px"><span style="display:inline-block;width:14.06px;text-align:center">.</span><span style="display:inline-block;width:14.06px;text-align:center">.</span><span style="display:inline-block;width:14.06px;text-align:center">.</span><span style="display:inline-block;width:14.06px;text-align:center">.</span><span style="display:inline-block;width:14.06px;text-align:center">.</span><span style="display:inline-block;width:14.06px;text-align:center">.</span><span style="display:inline-block;width:14.06px;text-align:center">.</span><span style="display:inline-block;width:14.06px;text-align:center">.</span><span style="display:inline-block;width:14.06px;text-align:center">.</span><span style="display:inline-block;width:14.06px;text-align:center">.</span><span style="display:inline-block;width:14.06px;text-align:center">.</span><span style="display:inline-block;width:14.06px;text-align:center">.</span></div>
<div class="abs hex" style="left:8.2px;top:103.84px;letter-spacing:.2px">00000060</div>
<div class="abs hex" style="left:73.8px;top:103.84px;letter-spacing:-.25px"><span style="display:inline-block;width:19.31px">00</span><span style="display:inline-block;width:19.31px">00</span><span style="display:inline-block;width:19.31px">00</span><span style="display:inline-block;width:19.31px">00</span><span style="display:inline-block;width:19.31px">00</span><span style="display:inline-block;width:19.31px">00</span><span style="display:inline-block;width:19.31px">00</span><span style="display:inline-block;width:19.31px">00</span><span style="display:inline-block;width:19.31px">00</span><span style="display:inline-block;width:19.31px">00</span><span style="display:inline-block;width:19.31px">00</span><span style="display:inline-block;width:19.31px">00</span><span style="display:inline-block;width:19.31px">00</span><span style="display:inline-block;width:19.31px">00</span><span style="display:inline-block;width:19.31px">00</span><span style="display:inline-block;width:19.31px">00</span></div>
<div class="abs hex" style="left:388.4px;top:102.74px"><span style="display:inline-block;width:14.06px;text-align:center">.</span><span style="display:inline-block;width:14.06px;text-align:center">.</span><span style="display:inline-block;width:14.06px;text-align:center">.</span><span style="display:inline-block;width:14.06px;text-align:center">.</span><span style="display:inline-block;width:14.06px;text-align:center">.</span><span style="display:inline-block;width:14.06px;text-align:center">.</span><span style="display:inline-block;width:14.06px;text-align:center">.</span><span style="display:inline-block;width:14.06px;text-align:center">.</span><span style="display:inline-block;width:14.06px;text-align:center">.</span><span style="display:inline-block;width:14.06px;text-align:center">.</span><span style="display:inline-block;width:14.06px;text-align:center">.</span><span style="display:inline-block;width:14.06px;text-align:center">.</span></div>
<div class="abs hex" style="left:8.2px;top:117.88px;letter-spacing:.2px">00000070</div>
<div class="abs hex" style="left:73.8px;top:117.88px;letter-spacing:-.25px"><span style="display:inline-block;width:19.31px">00</span><span style="display:inline-block;width:19.31px">00</span><span style="display:inline-block;width:19.31px">00</span><span style="display:inline-block;width:19.31px">00</span><span style="display:inline-block;width:19.31px">00</span><span style="display:inline-block;width:19.31px">00</span><span style="display:inline-block;width:19.31px">00</span><span style="display:inline-block;width:19.31px">00</span><span style="display:inline-block;width:19.31px">00</span><span style="display:inline-block;width:19.31px">00</span><span style="display:inline-block;width:19.31px">00</span><span style="display:inline-block;width:19.31px">00</span><span style="display:inline-block;width:19.31px">00</span><span style="display:inline-block;width:19.31px">00</span><span style="display:inline-block;width:19.31px">00</span><span style="display:inline-block;width:19.31px">00</span></div>
<div class="abs hex" style="left:388.4px;top:116.78px"><span style="display:inline-block;width:14.06px;text-align:center">.</span><span style="display:inline-block;width:14.06px;text-align:center">.</span><span style="display:inline-block;width:14.06px;text-align:center">.</span><span style="display:inline-block;width:14.06px;text-align:center">.</span><span style="display:inline-block;width:14.06px;text-align:center">.</span><span style="display:inline-block;width:14.06px;text-align:center">.</span><span style="display:inline-block;width:14.06px;text-align:center">.</span><span style="display:inline-block;width:14.06px;text-align:center">.</span><span style="display:inline-block;width:14.06px;text-align:center">.</span><span style="display:inline-block;width:14.06px;text-align:center">.</span><span style="display:inline-block;width:14.06px;text-align:center">.</span><span style="display:inline-block;width:14.06px;text-align:center">.</span></div>
<div class="abs hex" style="left:8.2px;top:131.92px;letter-spacing:.2px">00000080</div>
<div class="abs hex" style="left:73.8px;top:131.92px;letter-spacing:-.25px"><span style="display:inline-block;width:19.31px">00</span><span style="display:inline-block;width:19.31px">00</span><span style="display:inline-block;width:19.31px">00</span><span style="display:inline-block;width:19.31px">00</span><span style="display:inline-block;width:19.31px">00</span><span style="display:inline-block;width:19.31px">00</span><span style="display:inline-block;width:19.31px">00</span><span style="display:inline-block;width:19.31px">00</span><span style="display:inline-block;width:19.31px">00</span><span style="display:inline-block;width:19.31px">00</span><span style="display:inline-block;width:19.31px">00</span><span style="display:inline-block;width:19.31px">00</span><span style="display:inline-block;width:19.31px">00</span><span style="display:inline-block;width:19.31px">00</span><span style="display:inline-block;width:19.31px">00</span><span style="display:inline-block;width:19.31px">00</span></div>
<div class="abs hex" style="left:388.4px;top:130.82px"><span style="display:inline-block;width:14.06px;text-align:center">.</span><span style="display:inline-block;width:14.06px;text-align:center">.</span><span style="display:inline-block;width:14.06px;text-align:center">.</span><span style="display:inline-block;width:14.06px;text-align:center">.</span><span style="display:inline-block;width:14.06px;text-align:center">.</span><span style="display:inline-block;width:14.06px;text-align:center">.</span><span style="display:inline-block;width:14.06px;text-align:center">.</span><span style="display:inline-block;width:14.06px;text-align:center">.</span><span style="display:inline-block;width:14.06px;text-align:center">.</span><span style="display:inline-block;width:14.06px;text-align:center">.</span><span style="display:inline-block;width:14.06px;text-align:center">.</span><span style="display:inline-block;width:14.06px;text-align:center">.</span></div>
<div class="abs hex" style="left:8.2px;top:145.96px;letter-spacing:.2px">00000090</div>
<div class="abs hex" style="left:73.8px;top:145.96px;letter-spacing:-.25px"><span style="display:inline-block;width:19.31px">00</span><span style="display:inline-block;width:19.31px">00</span><span style="display:inline-block;width:19.31px">00</span><span style="display:inline-block;width:19.31px">00</span><span style="display:inline-block;width:19.31px">00</span><span style="display:inline-block;width:19.31px">00</span><span style="display:inline-block;width:19.31px">00</span><span style="display:inline-block;width:19.31px">00</span><span style="display:inline-block;width:19.31px">00</span><span style="display:inline-block;width:19.31px">00</span><span style="display:inline-block;width:19.31px">00</span><span style="display:inline-block;width:19.31px">00</span><span style="display:inline-block;width:19.31px">00</span><span style="display:inline-block;width:19.31px">00</span><span style="display:inline-block;width:19.31px">00</span><span style="display:inline-block;width:19.31px">00</span></div>
<div class="abs hex" style="left:388.4px;top:144.86px"><span style="display:inline-block;width:14.06px;text-align:center">.</span><span style="display:inline-block;width:14.06px;text-align:center">.</span><span style="display:inline-block;width:14.06px;text-align:center">.</span><span style="display:inline-block;width:14.06px;text-align:center">.</span><span style="display:inline-block;width:14.06px;text-align:center">.</span><span style="display:inline-block;width:14.06px;text-align:center">.</span><span style="display:inline-block;width:14.06px;text-align:center">.</span><span style="display:inline-block;width:14.06px;text-align:center">.</span><span style="display:inline-block;width:14.06px;text-align:center">.</span><span style="display:inline-block;width:14.06px;text-align:center">.</span><span style="display:inline-block;width:14.06px;text-align:center">.</span><span style="display:inline-block;width:14.06px;text-align:center">.</span></div></div>
<div class="abs" style="left:154.5px;top:508.5px;font-size:12px;line-height:16px;color:#1f7fc4;white-space:nowrap">复位操作成功!</div>
<div class="abs grp" style="left:712px;top:64.2px;width:176px;height:98px"></div>
<div class="abs glab" style="left:728px;top:56.8px">通讯方式</div>
<svg class="abs" style="left:722px;top:81px" width="14" height="36" viewBox="0 0 14 36"><circle cx="7" cy="7.2" r="5.3" fill="#f4f4f4" stroke="#8e8e8e" stroke-width="1"/><circle cx="7" cy="29" r="5.3" fill="#f4f4f4" stroke="#8e8e8e" stroke-width="1"/><circle cx="7" cy="29" r="2.5" fill="#555"/></svg>
<div class="abs" style="left:803.4px;top:80.5px;transform:translateX(-50%);font-weight:bold;font-size:11.3px;line-height:15px;color:#8b0000;white-space:nowrap">红外</div>
<div class="abs" style="left:803.4px;top:102.3px;transform:translateX(-50%);font-weight:bold;font-size:11.3px;line-height:15px;color:#8b0000;white-space:nowrap;letter-spacing:.6px">NEC适配器</div>
<div class="abs combo" style="left:720.9px;top:127px;width:158px"><span style="position:absolute;left:.3px;top:4.9px;font-weight:bold;font-size:11.3px;line-height:15px;white-space:nowrap;letter-spacing:.6px">00043650芯片</span></div>
<div class="abs pill" style="left:712.8px;top:167.9px;width:174.4px">识别钥匙/芯片</div>
<div class="abs pill" style="left:712.8px;top:198.6px;width:174.4px">读BE钥匙密码</div>
<div class="abs pill" style="left:712.8px;top:229.3px;width:174.4px">擦空</div>
<div class="abs pill" style="left:712.8px;top:260.0px;width:174.4px">打开文件/写入</div>
<div class="abs pill" style="left:712.8px;top:290.7px;width:174.4px">钥匙跳码修复</div>
<div class="abs pill" style="left:712.8px;top:321.4px;width:174.4px">保存 BE 钥匙文件</div>
<div class="abs pill" style="left:712.8px;top:352.1px;width:174.4px">读全新BGA钥匙</div>
<div class="abs pill" style="left:712.8px;top:382.8px;width:174.4px">CGPKE钥匙升级</div>
<div class="abs grp" style="left:712px;top:420px;width:176px;height:72.3px"></div>
<div class="abs glab" style="left:728px;top:412.3px">切换频率</div>
<div class="abs combo" style="left:720.9px;top:430.2px;width:158px"></div>
<div class="abs pill" style="left:721.3px;top:457.6px;width:157px">切换CG钥匙频率</div>
<div class="abs" style="left:712px;top:508.7px;width:175.7px;height:17.3px;background:#c0c0c0"></div>
<div class="abs" style="left:776.7px;top:508.7px;width:35.3px;height:17.3px;background:#22b14c"></div>
<svg class="abs" style="left:8.2px;top:537.6px" width="12" height="17" viewBox="0 0 12 17"><rect x="2.6" y=".8" width="6.8" height="5" rx=".8" fill="#3cb54a"/><rect x="4" y="2" width="1.5" height="1.6" fill="#d8f5dc"/><rect x="6.5" y="2" width="1.5" height="1.6" fill="#d8f5dc"/><rect x="1.2" y="5.4" width="9.6" height="10.8" rx="1.6" fill="#3cb54a"/><path d="M3.6 11 L5.3 12.8 L8.5 8.8" stroke="#fff" stroke-width="1.5" fill="none"/></svg>
<div class="abs" style="left:24.5px;top:538.5px;font-size:12px;line-height:18px;color:#111;white-space:nowrap;letter-spacing:.1px">MB000D6F</div>
<div class="abs" id="tel" style="left:302px;top:538px;font-size:11px;line-height:17px;color:#111;white-space:pre;letter-spacing:.27px">电话：0755-28687293/0755-28833004  QQ：800163968</div>
<div class="abs" id="ver" style="right:6.5px;top:538px;font-size:11px;line-height:17px;color:#111;white-space:nowrap">版本：3.3.2.0</div>
<div class="abs" style="left:388.3px;top:222.8px;width:120.6px;height:130.3px;border-radius:6.5px;background:#fff;box-shadow:0 0 0 .7px rgba(0,0,0,.24),0 6px 18px rgba(0,0,0,.3),0 1px 4px rgba(0,0,0,.12);overflow:hidden">
<div class="abs" style="left:0;top:0;width:100%;height:22.6px;background:#f3f3f3"></div>
<div class="abs" style="left:0;top:85.4px;width:100%;height:46px;background:#f0f0f0"></div>
<div class="abs" style="left:3.8px;top:5px;font-size:10px;line-height:14px;color:#8a8a8a;left:3.2px">CGMB</div>
<svg class="abs" style="left:102.5px;top:6.6px" width="10" height="10" viewBox="0 0 10 10"><path d="M.7 .7 L9.3 9.3 M9.3 .7 L.7 9.3" stroke="#6a6a6a" stroke-width=".9" fill="none"/></svg>
<div class="abs" style="left:10.2px;top:47.4px;font-size:10.05px;line-height:14px;color:#111;white-space:nowrap">复位操作成功!</div>
<div class="abs" style="left:27.9px;top:96.9px;width:75.6px;height:23.2px;border:1px solid #cfcfcf;border-radius:3.5px;background:#fdfdfd;text-align:center;font-size:10.2px;line-height:22.8px;color:#111">确定</div>
</div>
</body></html>
